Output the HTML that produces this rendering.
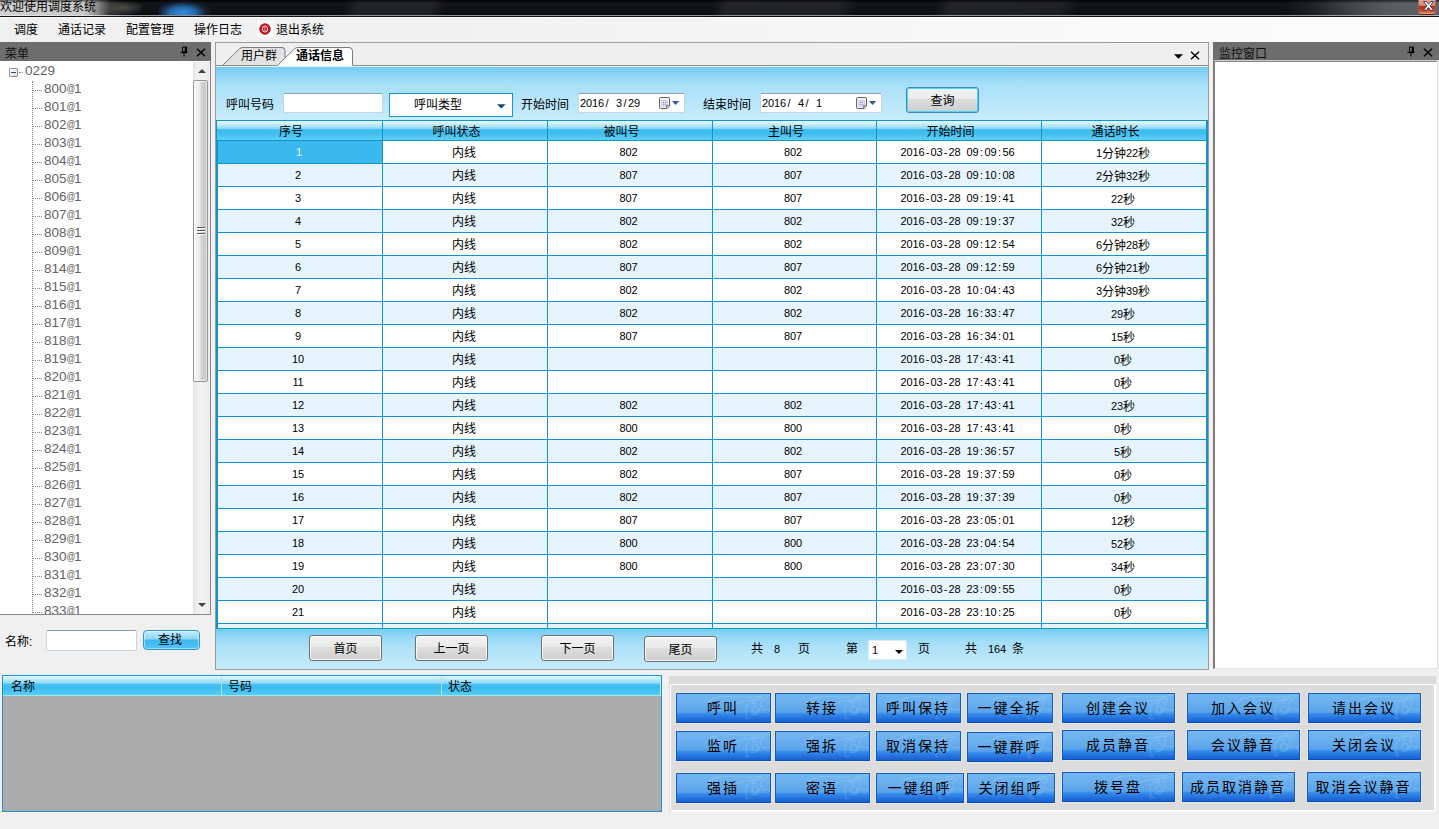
<!DOCTYPE html>
<html lang="zh-CN">
<head>
<meta charset="utf-8">
<title>欢迎使用调度系统</title>
<style>
*{margin:0;padding:0;box-sizing:border-box}
html,body{width:1439px;height:829px;overflow:hidden}
body{position:relative;background:#f0f0f0;font-family:"Liberation Sans","Noto Sans CJK SC",sans-serif;font-size:12px;color:#000;line-height:14px}
div,span,i,b{position:absolute;display:block;white-space:nowrap}
svg{position:absolute;display:block;overflow:visible}
.m{font-family:"Liberation Sans","Noto Sans CJK SC",sans-serif;font-size:11px;letter-spacing:-.12px}
span.mi,span.ci{position:static;display:inline}
span.mi{font-family:"Liberation Sans","Noto Sans CJK SC",sans-serif;font-size:11px;letter-spacing:-.12px;vertical-align:1px}

/* title bar */
#title{left:0;top:0;width:1439px;height:15px;background:#0b0d10;overflow:hidden}
#title .tg{left:0;top:0;width:1439px;height:16px}
#title .txt{left:0;top:0;height:15px;line-height:15px;font-size:12px;color:#000;z-index:3}
#tline0{left:0;top:15px;width:1439px;height:1px;background:linear-gradient(90deg,#e4e4e4 0,#dcdcdc 90px,#8f9294 135px,#8f9294 1300px,#b4b6b8 1439px)}
#tline{left:0;top:16px;width:1439px;height:1px;background:#101214}
#tline2{left:0;top:17px;width:1439px;height:1px;background:#fbfbfb;z-index:2}
#closeb{left:1418px;top:0;width:18px;height:15px;border-radius:0 0 3px 3px;background:linear-gradient(#e9a596 0,#d98676 38%,#bd3318 46%,#b8391f 62%,#d06a4a 88%,#e7b0a0 100%);border:1px solid #5b2017;border-top:0;border-left-color:#8d6a64;border-right-color:#8d6a64;z-index:4}

/* menu */
#menu{left:0;top:17px;width:1439px;height:25px;background:linear-gradient(90deg,#f0f0f0 0,#f1f1f1 30%,#fafafa 80%,#fcfcfc 100%)}
#menu .mi2{top:6px;height:14px;line-height:14px;font-size:12px}
#exitico{left:257px;top:4px;width:16px;height:16px;background:#fcfcfc}

/* dock headers */
.dockhead{background:#6d6d6d}
.dockhead .dh-t{top:5px;height:14px;line-height:14px;font-size:12px;color:#101010}

/* tree */
#tree{left:0;top:61px;width:211px;height:554px;background:#fff;border-right:1px solid #828790;border-bottom:1px solid #828790;overflow:hidden}
.tn{font-family:"Liberation Sans","Noto Sans CJK SC",sans-serif;font-size:13.5px;letter-spacing:0;color:#636363;height:18px;line-height:16px}
.tdots{height:0;border-top:1px dotted #8a8a8a}
.tvline{left:32px;top:20px;width:0;height:540px;border-left:1px dotted #8a8a8a}
.tbox{left:9px;top:7px;width:9px;height:9px;border:1px solid #919191;background:linear-gradient(135deg,#fff,#e0e0e0);border-radius:1px}
.tbox i{left:1px;top:3px;width:5px;height:1px;background:#2a3fae}
.lbl{height:14px;line-height:14px;font-size:12px}
.inp{background:#fff;border:1px solid #c4d6e4;border-top-color:#8e9db2;border-radius:2px}
.bbtn{border:1px solid #2a97d8;border-radius:4px;text-align:center;font-size:12px;background:linear-gradient(#c6ecfb 0,#8dd5f6 45%,#3fb9ef 50%,#52c4f3 100%);box-shadow:inset 0 0 0 1px rgba(255,255,255,.45)}

/* center */
#center{left:215px;top:42px;width:994px;height:628px;border:1px solid #9b9b9b;background:#efefef;overflow:hidden}
#center>*{}
#blue1{left:0;top:24px;width:992px;height:54px;background:linear-gradient(#72ccf5 0,#8ed6f7 14%,#a6dff8 32%,#b4e4f9 55%,#c8edfb 100%)}
#blue2{left:0;top:586px;width:992px;height:40px;background:linear-gradient(#72ccf5 0,#8ed6f7 16%,#a6dff8 36%,#b4e4f9 60%,#c6ecfb 100%)}
.tabline{left:0;top:22px;width:992px;height:1px;background:#8e8e8e}
#tabline2{left:0;top:23px;width:992px;height:1px;background:#e8f3f8}

/* grid: origin at page (216,120) => center-relative (0,77) */
#grid{left:0;top:77px;width:992px;height:509px;background:#0f94cf;overflow:hidden}
.th{top:1px;height:19px;line-height:22px;overflow:hidden;text-align:center;padding-right:17px;font-size:12px;background:linear-gradient(#e6f9fe 0,#c4edfb 18%,#8fd9f6 40%,#45c0f0 43%,#3dbcef 62%,#5ed1f8 100%)}
.tr{left:2px;width:988px;height:22px;background:#fff}
.tr.alt{background:#e6f5fd}
.td{top:0;height:22px;line-height:25px;overflow:hidden;text-align:center;font-size:12px;margin-left:-2px;padding-right:2px}
.td.m{font-size:11px;line-height:22px;padding-right:3px}
.td.sel{background:#3ab9ef;color:#fff;margin-left:-1px;padding-right:3px}
.vl{top:0;width:1px;height:509px;background:#0f94cf}

/* generic win buttons */
.gbtn{border:1px solid #707070;border-radius:3px;text-align:center;font-size:12px;background:linear-gradient(#f2f2f2 0,#ebebeb 43%,#dddddd 47%,#cfcfcf 100%);box-shadow:inset 0 0 0 1px rgba(255,255,255,.8)}
.qbtn{border:1px solid #3c8ac0;border-radius:3px;text-align:center;font-size:12px;background:linear-gradient(#f2f2f2 0,#ebebeb 43%,#dddddd 47%,#cfcfcf 100%);box-shadow:inset 0 0 0 1px #48d8fb}

/* monitor */
#monitor{left:1213px;top:60px;width:225px;height:609px;background:#fff;border-left:2px solid #7c7c7c;border-top:1px solid #c9c9c9;box-shadow:inset 0 1px 0 #8a8a8a;border-right:1px solid #e3e3e3;border-bottom:1px solid #e3e3e3}

/* bottom list */
#blist{left:2px;top:675px;width:660px;height:137px;background:#ababab;border:1px solid #1a93cd}
#blist .lh{left:0;top:0;width:658px;height:20px;background:linear-gradient(#e4f8fe 0,#b9e8fa 18%,#8fd9f6 38%,#45c0f0 43%,#3dbcef 62%,#58ccf6 100%);border-bottom:1px solid #9be9ea;box-shadow:inset -1px 0 0 #b6eef8}
#blist .lh>span{top:4px;height:14px;line-height:14px;font-size:12px}
#blist .lh i{top:0;width:1px;height:19px;background:#a8e4f9}

/* button panel */
#bpanel{left:669px;top:676px;width:767px;height:136px;background:#dcdcdc}
#bpanel .etch{left:1px;top:8px;width:766px;height:128px;border:1px solid #fff;border-right:2px solid #fdfdfd;border-bottom:2px solid #fdfdfd;border-radius:2px}
.ab{border:1px solid #0d5cc6;background:linear-gradient(#73b5f1 0,#6bb0ef 30%,#5aa3ea 65%,#3891ef 69%,#2d80e5 78%,#2069d9 92%,#1a5fd0 100%);border-bottom-color:#0452c2;text-align:center;overflow:hidden;box-shadow:0 0 0 1px #e9e4e0}
.ab>span{left:0;top:0;width:100%;height:100%;line-height:28px;font-size:14px;letter-spacing:2px;color:#000;text-align:center;padding-right:1px}
.ab svg{right:0;top:0}

b.c{position:static;display:inline-block;width:6px;text-align:center;letter-spacing:0;font-weight:normal}
b.at{position:static;display:inline-block;width:7.5px;font-weight:normal;font-size:8.6px;line-height:10px;vertical-align:1.5px;letter-spacing:0;transform:scaleY(1.22);transform-origin:50% 100%}

</style>
</head>
<body>

<div id="title">
<div class="tg" style="background:linear-gradient(96deg,#0b0d10 0,#0b0d10 1278px,#191c1f 1305px,#3d4043 1343px,#54575a 1380px,#606366 1439px)"></div>
<div class="tg" style="background:linear-gradient(105deg,rgba(255,255,255,0) 334px,rgba(255,255,255,.075) 348px,rgba(255,255,255,.075) 418px,rgba(255,255,255,0) 432px,rgba(255,255,255,0) 690px,rgba(255,255,255,.08) 704px,rgba(255,255,255,.07) 812px,rgba(255,255,255,0) 830px,rgba(255,255,255,0) 906px,rgba(255,255,255,.075) 920px,rgba(255,255,255,.06) 1026px,rgba(255,255,255,0) 1044px)"></div>
<div class="tg" style="background:linear-gradient(rgba(0,0,0,.55) 0,rgba(0,0,0,.25) 2px,rgba(255,255,255,.03) 3px,rgba(255,255,255,0) 100%)"></div>
<div style="left:158px;top:0;width:54px;height:19px;background:radial-gradient(ellipse at 46% 68%,rgba(52,150,232,.95) 0,rgba(44,128,210,.8) 30%,rgba(24,70,130,.25) 58%,rgba(20,60,110,0) 74%)"></div>
<div style="left:100px;top:1px;width:42px;height:15px;background:radial-gradient(ellipse at 55% 45%,rgba(150,140,100,.5) 0,rgba(100,110,110,.25) 45%,rgba(100,100,90,0) 72%)"></div>
<div style="left:0;top:0;width:150px;height:16px;background:linear-gradient(90deg,rgba(214,214,214,.97) 0,rgba(208,208,208,.96) 84px,rgba(170,170,170,.78) 98px,rgba(100,100,100,.4) 110px,rgba(40,40,40,.1) 122px,rgba(30,30,30,0) 130px)"></div>
<div style="left:0;top:0;width:150px;height:3px;background:linear-gradient(rgba(0,0,0,.55),rgba(0,0,0,0))"></div>
<div class="txt">欢迎使用调度系统</div>
<div id="closeb"><svg width="11" height="10" viewBox="0 0 11 10" style="left:4px;top:1px"><path d="M.4 .5 H3.3 L5.5 3.3 L7.7 .5 H10.6 L7.1 4.9 L10.6 9.3 H7.7 L5.5 6.5 L3.3 9.3 H.4 L3.9 4.9 Z" fill="#fff" stroke="#2c3248" stroke-width=".9" stroke-linejoin="round"/></svg></div>
</div>
<div id="tline0"></div><div id="tline"></div><div id="tline2"></div>
<div id="menu">
<span class="mi2" style="left:14px">调度</span>
<span class="mi2" style="left:58px">通话记录</span>
<span class="mi2" style="left:126px">配置管理</span>
<span class="mi2" style="left:194px">操作日志</span>
<div id="exitico"><svg width="16" height="16" viewBox="0 0 16 16"><circle cx="8" cy="8" r="5.3" fill="#c4161c"/><circle cx="8" cy="8" r="5.3" fill="none" stroke="#a20f14" stroke-width=".8"/><ellipse cx="8" cy="8" rx="2.6" ry="3.1" fill="none" stroke="#fbe3e3" stroke-width="1"/><rect x="7.4" y="6" width="1.2" height="4" fill="#e88" /></svg></div>
<span class="mi2" style="left:276px">退出系统</span>
</div>
<div class="dockhead" style="left:0;top:42px;width:211px;height:19px"><span class="dh-t" style="left:5px">菜单</span><svg width="8" height="11" viewBox="0 0 8 11" style="left:180px;top:4px"><path d="M2.5 1 H6.5 V6 H2.5 Z" fill="none" stroke="#000" stroke-width="1"/><path d="M5.5 1 V6" stroke="#000" stroke-width="1.4"/><path d="M0.5 6.5 H7.5" stroke="#000" stroke-width="1.2"/><path d="M4 7 V10.5" stroke="#000" stroke-width="1.1"/></svg><svg width="10" height="9" viewBox="0 0 10 9" style="left:196px;top:6px"><path d="M1 .8 L9 8.2 M9 .8 L1 8.2" stroke="#000" stroke-width="1.5"/></svg>
</div>
<div id="tree">
<div class="tvline"></div>
<div class="tbox"><i></i></div><div class="tdots" style="left:19px;top:11px;width:4px"></div><div class="tn" style="left:25px;top:2px">0229</div>
<div class="tdots" style="left:33px;top:29px;width:9px"></div><div class="tn" style="left:44px;top:20px">800<b class="at">@</b>1</div>
<div class="tdots" style="left:33px;top:47px;width:9px"></div><div class="tn" style="left:44px;top:38px">801<b class="at">@</b>1</div>
<div class="tdots" style="left:33px;top:65px;width:9px"></div><div class="tn" style="left:44px;top:56px">802<b class="at">@</b>1</div>
<div class="tdots" style="left:33px;top:83px;width:9px"></div><div class="tn" style="left:44px;top:74px">803<b class="at">@</b>1</div>
<div class="tdots" style="left:33px;top:101px;width:9px"></div><div class="tn" style="left:44px;top:92px">804<b class="at">@</b>1</div>
<div class="tdots" style="left:33px;top:119px;width:9px"></div><div class="tn" style="left:44px;top:110px">805<b class="at">@</b>1</div>
<div class="tdots" style="left:33px;top:137px;width:9px"></div><div class="tn" style="left:44px;top:128px">806<b class="at">@</b>1</div>
<div class="tdots" style="left:33px;top:155px;width:9px"></div><div class="tn" style="left:44px;top:146px">807<b class="at">@</b>1</div>
<div class="tdots" style="left:33px;top:173px;width:9px"></div><div class="tn" style="left:44px;top:164px">808<b class="at">@</b>1</div>
<div class="tdots" style="left:33px;top:191px;width:9px"></div><div class="tn" style="left:44px;top:182px">809<b class="at">@</b>1</div>
<div class="tdots" style="left:33px;top:209px;width:9px"></div><div class="tn" style="left:44px;top:200px">814<b class="at">@</b>1</div>
<div class="tdots" style="left:33px;top:227px;width:9px"></div><div class="tn" style="left:44px;top:218px">815<b class="at">@</b>1</div>
<div class="tdots" style="left:33px;top:245px;width:9px"></div><div class="tn" style="left:44px;top:236px">816<b class="at">@</b>1</div>
<div class="tdots" style="left:33px;top:263px;width:9px"></div><div class="tn" style="left:44px;top:254px">817<b class="at">@</b>1</div>
<div class="tdots" style="left:33px;top:281px;width:9px"></div><div class="tn" style="left:44px;top:272px">818<b class="at">@</b>1</div>
<div class="tdots" style="left:33px;top:299px;width:9px"></div><div class="tn" style="left:44px;top:290px">819<b class="at">@</b>1</div>
<div class="tdots" style="left:33px;top:317px;width:9px"></div><div class="tn" style="left:44px;top:308px">820<b class="at">@</b>1</div>
<div class="tdots" style="left:33px;top:335px;width:9px"></div><div class="tn" style="left:44px;top:326px">821<b class="at">@</b>1</div>
<div class="tdots" style="left:33px;top:353px;width:9px"></div><div class="tn" style="left:44px;top:344px">822<b class="at">@</b>1</div>
<div class="tdots" style="left:33px;top:371px;width:9px"></div><div class="tn" style="left:44px;top:362px">823<b class="at">@</b>1</div>
<div class="tdots" style="left:33px;top:389px;width:9px"></div><div class="tn" style="left:44px;top:380px">824<b class="at">@</b>1</div>
<div class="tdots" style="left:33px;top:407px;width:9px"></div><div class="tn" style="left:44px;top:398px">825<b class="at">@</b>1</div>
<div class="tdots" style="left:33px;top:425px;width:9px"></div><div class="tn" style="left:44px;top:416px">826<b class="at">@</b>1</div>
<div class="tdots" style="left:33px;top:443px;width:9px"></div><div class="tn" style="left:44px;top:434px">827<b class="at">@</b>1</div>
<div class="tdots" style="left:33px;top:461px;width:9px"></div><div class="tn" style="left:44px;top:452px">828<b class="at">@</b>1</div>
<div class="tdots" style="left:33px;top:479px;width:9px"></div><div class="tn" style="left:44px;top:470px">829<b class="at">@</b>1</div>
<div class="tdots" style="left:33px;top:497px;width:9px"></div><div class="tn" style="left:44px;top:488px">830<b class="at">@</b>1</div>
<div class="tdots" style="left:33px;top:515px;width:9px"></div><div class="tn" style="left:44px;top:506px">831<b class="at">@</b>1</div>
<div class="tdots" style="left:33px;top:533px;width:9px"></div><div class="tn" style="left:44px;top:524px">832<b class="at">@</b>1</div>
<div class="tdots" style="left:33px;top:551px;width:9px"></div><div class="tn" style="left:44px;top:542px">833<b class="at">@</b>1</div>
<div style="left:193px;top:1px;width:17px;height:553px;background:linear-gradient(90deg,#e3e3e3 0,#efefef 20%,#f2f2f2 50%,#ececec 100%)"></div>
<svg width="8" height="4" viewBox="0 0 8 4" style="left:198px;top:8px"><path d="M0 4 L4 0 L8 4 Z" fill="#444"/></svg>
<div style="left:193px;top:19px;width:15px;height:302px;border:1px solid #959595;border-radius:2px;background:linear-gradient(90deg,#f5f5f5 0,#e9e9e9 45%,#d4d4d4 55%,#c4c4c4 100%);box-shadow:inset 0 0 0 1px rgba(255,255,255,.6)"></div>
<div style="left:197px;top:166px;width:8px;height:1px;background:#5a5a5a;box-shadow:0 3px 0 #5a5a5a,0 6px 0 #5a5a5a,0 1px 0 #fff,0 4px 0 #fff,0 7px 0 #fff"></div>
<svg width="8" height="4" viewBox="0 0 8 4" style="left:198px;top:542px"><path d="M0 0 L4 4 L8 0 Z" fill="#444"/></svg>
</div>
<div class="lbl" style="left:5px;top:635px;width:40px">名称:</div>
<div class="inp" style="left:46px;top:630px;width:91px;height:21px"></div>
<div class="bbtn" style="left:143px;top:630px;width:57px;height:20px;line-height:19px;padding-right:3px">查找</div>
<div id="center">
<svg width="340" height="24" viewBox="0 0 340 24" style="left:0;top:0">
<path d="M6.5 22.5 L23.5 5.8 Q25 4.5 27 4.5 H66 Q69 4.5 69 7.5 V22.5 Z" fill="#e2e2e2" stroke="#7a7a7a" stroke-width="1"/>
<path d="M61 23 L78.5 5.8 Q80 4.5 82 4.5 H133 Q136.5 4.5 136.5 8 V23 Z" fill="#fff" stroke="none"/>
<path d="M61.5 22.5 L78.5 5.8 Q80 4.5 82 4.5 H133 Q136.5 4.5 136.5 8 V22.5" fill="none" stroke="#7a7a7a" stroke-width="1"/>
</svg>
<div class="tabline" style="left:0;width:62px"></div><div class="tabline" style="left:137px;width:855px"></div>
<div id="tabline2"></div>
<span style="left:25px;top:6px;height:14px;line-height:14px;font-size:12px">用户群</span>
<span style="left:80px;top:6px;height:14px;line-height:14px;font-size:12px;font-weight:bold">通话信息</span>
<svg width="9" height="5" viewBox="0 0 9 5" style="left:958px;top:11px"><path d="M0 .3 H9 L4.5 4.8 Z" fill="#000"/></svg>
<svg width="10" height="9" viewBox="0 0 10 9" style="left:974px;top:8px"><path d="M1 .8 L9 8.2 M9 .8 L1 8.2" stroke="#000" stroke-width="1.5"/></svg>
<div id="blue1"></div>
<span class="lbl" style="left:10px;top:55px">呼叫号码</span>
<div class="inp" style="left:67px;top:50px;width:100px;height:20px"></div>
<div style="left:173px;top:50px;width:124px;height:24px;background:#fff;border:1px solid #1a94cf"><span style="left:24px;top:4px;height:14px;line-height:14px;font-size:12px">呼叫类型</span><svg width="9" height="5" viewBox="0 0 9 5" style="left:107px;top:10px"><path d="M0 .2 H8.6 L4.3 4.4 Z" fill="#0f4f6e"/></svg></div>
<span class="lbl" style="left:305px;top:55px">开始时间</span>
<div class="inp" style="left:362px;top:50px;width:107px;height:20px"><span class="m" style="left:1px;top:2px;height:14px;line-height:14px">2016<b class="c">/</b><b class="c">&nbsp;</b>3<b class="c">/</b>29</span><svg width="21" height="13" viewBox="0 0 21 13" style="left:80px;top:3px"><path d="M2.5 2.5 H11.5 V9.5 L9 12.5 H2.5 Z" fill="#9aa0aa" opacity=".35"/><path d="M1.8 .5 H9.2 Q10.5 .5 10.5 1.8 V8.6 L7.8 11.5 H1.8 Q.5 11.5 .5 10.2 V1.8 Q.5 .5 1.8 .5 Z" fill="#eef2fb" stroke="#6e605d" stroke-width="1"/><rect x="2.4" y="3.3" width="6.2" height="6.2" fill="#b3bbce"/><g fill="#fff"><rect x="3.1" y="4.1" width="1" height="1"/><rect x="5.1" y="4.1" width="1" height="1"/><rect x="7.1" y="4.1" width="1" height="1"/><rect x="3.1" y="6.1" width="1" height="1"/><rect x="5.1" y="6.1" width="1" height="1"/><rect x="7.1" y="6.1" width="1" height="1"/><rect x="3.1" y="8.1" width="1" height="1"/><rect x="5.1" y="8.1" width="1" height="1"/></g><path d="M7.8 11.3 V8.8 H10.3" fill="#fff" stroke="#6e605d" stroke-width="1"/><path d="M13 4 H20.2 L16.6 8 Z" fill="#3a5590"/></svg></div>
<span class="lbl" style="left:487px;top:55px">结束时间</span>
<div class="inp" style="left:544px;top:50px;width:122px;height:20px"><span class="m" style="left:1px;top:2px;height:14px;line-height:14px">2016<b class="c">/</b><b class="c">&nbsp;</b>4<b class="c">/</b><b class="c">&nbsp;</b>1</span><svg width="21" height="13" viewBox="0 0 21 13" style="left:95px;top:3px"><path d="M2.5 2.5 H11.5 V9.5 L9 12.5 H2.5 Z" fill="#9aa0aa" opacity=".35"/><path d="M1.8 .5 H9.2 Q10.5 .5 10.5 1.8 V8.6 L7.8 11.5 H1.8 Q.5 11.5 .5 10.2 V1.8 Q.5 .5 1.8 .5 Z" fill="#eef2fb" stroke="#6e605d" stroke-width="1"/><rect x="2.4" y="3.3" width="6.2" height="6.2" fill="#b3bbce"/><g fill="#fff"><rect x="3.1" y="4.1" width="1" height="1"/><rect x="5.1" y="4.1" width="1" height="1"/><rect x="7.1" y="4.1" width="1" height="1"/><rect x="3.1" y="6.1" width="1" height="1"/><rect x="5.1" y="6.1" width="1" height="1"/><rect x="7.1" y="6.1" width="1" height="1"/><rect x="3.1" y="8.1" width="1" height="1"/><rect x="5.1" y="8.1" width="1" height="1"/></g><path d="M7.8 11.3 V8.8 H10.3" fill="#fff" stroke="#6e605d" stroke-width="1"/><path d="M13 4 H20.2 L16.6 8 Z" fill="#3a5590"/></svg></div>
<div class="qbtn" style="left:690px;top:44px;width:73px;height:26px;line-height:26px">查询</div>
<div id="grid">
<div class="th" style="left:1px;width:165px">序号</div><div class="th" style="left:167px;width:164px">呼叫状态</div><div class="th" style="left:332px;width:164px">被叫号</div><div class="th" style="left:497px;width:163px">主叫号</div><div class="th" style="left:661px;width:164px">开始时间</div><div class="th" style="left:826px;width:164px">通话时长</div>
<div class="tr" style="top:21px"><span class="td m sel" style="left:1px;width:165px">1</span><span class="td" style="left:167px;width:164px">内线</span><span class="td m" style="left:332px;width:164px">802</span><span class="td m" style="left:497px;width:163px">802</span><span class="td m" style="left:661px;width:164px">2016<b class="c">-</b>03<b class="c">-</b>28<b class="c">&nbsp;</b>09<b class="c">:</b>09<b class="c">:</b>56</span><span class="td" style="left:826px;width:164px"><span class="mi">1</span>分钟<span class="mi">22</span>秒</span></div>
<div class="tr alt" style="top:44px"><span class="td m" style="left:1px;width:165px">2</span><span class="td" style="left:167px;width:164px">内线</span><span class="td m" style="left:332px;width:164px">807</span><span class="td m" style="left:497px;width:163px">807</span><span class="td m" style="left:661px;width:164px">2016<b class="c">-</b>03<b class="c">-</b>28<b class="c">&nbsp;</b>09<b class="c">:</b>10<b class="c">:</b>08</span><span class="td" style="left:826px;width:164px"><span class="mi">2</span>分钟<span class="mi">32</span>秒</span></div>
<div class="tr" style="top:67px"><span class="td m" style="left:1px;width:165px">3</span><span class="td" style="left:167px;width:164px">内线</span><span class="td m" style="left:332px;width:164px">807</span><span class="td m" style="left:497px;width:163px">807</span><span class="td m" style="left:661px;width:164px">2016<b class="c">-</b>03<b class="c">-</b>28<b class="c">&nbsp;</b>09<b class="c">:</b>19<b class="c">:</b>41</span><span class="td" style="left:826px;width:164px"><span class="mi">22</span>秒</span></div>
<div class="tr alt" style="top:90px"><span class="td m" style="left:1px;width:165px">4</span><span class="td" style="left:167px;width:164px">内线</span><span class="td m" style="left:332px;width:164px">802</span><span class="td m" style="left:497px;width:163px">802</span><span class="td m" style="left:661px;width:164px">2016<b class="c">-</b>03<b class="c">-</b>28<b class="c">&nbsp;</b>09<b class="c">:</b>19<b class="c">:</b>37</span><span class="td" style="left:826px;width:164px"><span class="mi">32</span>秒</span></div>
<div class="tr" style="top:113px"><span class="td m" style="left:1px;width:165px">5</span><span class="td" style="left:167px;width:164px">内线</span><span class="td m" style="left:332px;width:164px">802</span><span class="td m" style="left:497px;width:163px">802</span><span class="td m" style="left:661px;width:164px">2016<b class="c">-</b>03<b class="c">-</b>28<b class="c">&nbsp;</b>09<b class="c">:</b>12<b class="c">:</b>54</span><span class="td" style="left:826px;width:164px"><span class="mi">6</span>分钟<span class="mi">28</span>秒</span></div>
<div class="tr alt" style="top:136px"><span class="td m" style="left:1px;width:165px">6</span><span class="td" style="left:167px;width:164px">内线</span><span class="td m" style="left:332px;width:164px">807</span><span class="td m" style="left:497px;width:163px">807</span><span class="td m" style="left:661px;width:164px">2016<b class="c">-</b>03<b class="c">-</b>28<b class="c">&nbsp;</b>09<b class="c">:</b>12<b class="c">:</b>59</span><span class="td" style="left:826px;width:164px"><span class="mi">6</span>分钟<span class="mi">21</span>秒</span></div>
<div class="tr" style="top:159px"><span class="td m" style="left:1px;width:165px">7</span><span class="td" style="left:167px;width:164px">内线</span><span class="td m" style="left:332px;width:164px">802</span><span class="td m" style="left:497px;width:163px">802</span><span class="td m" style="left:661px;width:164px">2016<b class="c">-</b>03<b class="c">-</b>28<b class="c">&nbsp;</b>10<b class="c">:</b>04<b class="c">:</b>43</span><span class="td" style="left:826px;width:164px"><span class="mi">3</span>分钟<span class="mi">39</span>秒</span></div>
<div class="tr alt" style="top:182px"><span class="td m" style="left:1px;width:165px">8</span><span class="td" style="left:167px;width:164px">内线</span><span class="td m" style="left:332px;width:164px">802</span><span class="td m" style="left:497px;width:163px">802</span><span class="td m" style="left:661px;width:164px">2016<b class="c">-</b>03<b class="c">-</b>28<b class="c">&nbsp;</b>16<b class="c">:</b>33<b class="c">:</b>47</span><span class="td" style="left:826px;width:164px"><span class="mi">29</span>秒</span></div>
<div class="tr" style="top:205px"><span class="td m" style="left:1px;width:165px">9</span><span class="td" style="left:167px;width:164px">内线</span><span class="td m" style="left:332px;width:164px">807</span><span class="td m" style="left:497px;width:163px">807</span><span class="td m" style="left:661px;width:164px">2016<b class="c">-</b>03<b class="c">-</b>28<b class="c">&nbsp;</b>16<b class="c">:</b>34<b class="c">:</b>01</span><span class="td" style="left:826px;width:164px"><span class="mi">15</span>秒</span></div>
<div class="tr alt" style="top:228px"><span class="td m" style="left:1px;width:165px">10</span><span class="td" style="left:167px;width:164px">内线</span><span class="td m" style="left:332px;width:164px"></span><span class="td m" style="left:497px;width:163px"></span><span class="td m" style="left:661px;width:164px">2016<b class="c">-</b>03<b class="c">-</b>28<b class="c">&nbsp;</b>17<b class="c">:</b>43<b class="c">:</b>41</span><span class="td" style="left:826px;width:164px"><span class="mi">0</span>秒</span></div>
<div class="tr" style="top:251px"><span class="td m" style="left:1px;width:165px">11</span><span class="td" style="left:167px;width:164px">内线</span><span class="td m" style="left:332px;width:164px"></span><span class="td m" style="left:497px;width:163px"></span><span class="td m" style="left:661px;width:164px">2016<b class="c">-</b>03<b class="c">-</b>28<b class="c">&nbsp;</b>17<b class="c">:</b>43<b class="c">:</b>41</span><span class="td" style="left:826px;width:164px"><span class="mi">0</span>秒</span></div>
<div class="tr alt" style="top:274px"><span class="td m" style="left:1px;width:165px">12</span><span class="td" style="left:167px;width:164px">内线</span><span class="td m" style="left:332px;width:164px">802</span><span class="td m" style="left:497px;width:163px">802</span><span class="td m" style="left:661px;width:164px">2016<b class="c">-</b>03<b class="c">-</b>28<b class="c">&nbsp;</b>17<b class="c">:</b>43<b class="c">:</b>41</span><span class="td" style="left:826px;width:164px"><span class="mi">23</span>秒</span></div>
<div class="tr" style="top:297px"><span class="td m" style="left:1px;width:165px">13</span><span class="td" style="left:167px;width:164px">内线</span><span class="td m" style="left:332px;width:164px">800</span><span class="td m" style="left:497px;width:163px">800</span><span class="td m" style="left:661px;width:164px">2016<b class="c">-</b>03<b class="c">-</b>28<b class="c">&nbsp;</b>17<b class="c">:</b>43<b class="c">:</b>41</span><span class="td" style="left:826px;width:164px"><span class="mi">0</span>秒</span></div>
<div class="tr alt" style="top:320px"><span class="td m" style="left:1px;width:165px">14</span><span class="td" style="left:167px;width:164px">内线</span><span class="td m" style="left:332px;width:164px">802</span><span class="td m" style="left:497px;width:163px">802</span><span class="td m" style="left:661px;width:164px">2016<b class="c">-</b>03<b class="c">-</b>28<b class="c">&nbsp;</b>19<b class="c">:</b>36<b class="c">:</b>57</span><span class="td" style="left:826px;width:164px"><span class="mi">5</span>秒</span></div>
<div class="tr" style="top:343px"><span class="td m" style="left:1px;width:165px">15</span><span class="td" style="left:167px;width:164px">内线</span><span class="td m" style="left:332px;width:164px">802</span><span class="td m" style="left:497px;width:163px">807</span><span class="td m" style="left:661px;width:164px">2016<b class="c">-</b>03<b class="c">-</b>28<b class="c">&nbsp;</b>19<b class="c">:</b>37<b class="c">:</b>59</span><span class="td" style="left:826px;width:164px"><span class="mi">0</span>秒</span></div>
<div class="tr alt" style="top:366px"><span class="td m" style="left:1px;width:165px">16</span><span class="td" style="left:167px;width:164px">内线</span><span class="td m" style="left:332px;width:164px">802</span><span class="td m" style="left:497px;width:163px">807</span><span class="td m" style="left:661px;width:164px">2016<b class="c">-</b>03<b class="c">-</b>28<b class="c">&nbsp;</b>19<b class="c">:</b>37<b class="c">:</b>39</span><span class="td" style="left:826px;width:164px"><span class="mi">0</span>秒</span></div>
<div class="tr" style="top:389px"><span class="td m" style="left:1px;width:165px">17</span><span class="td" style="left:167px;width:164px">内线</span><span class="td m" style="left:332px;width:164px">807</span><span class="td m" style="left:497px;width:163px">807</span><span class="td m" style="left:661px;width:164px">2016<b class="c">-</b>03<b class="c">-</b>28<b class="c">&nbsp;</b>23<b class="c">:</b>05<b class="c">:</b>01</span><span class="td" style="left:826px;width:164px"><span class="mi">12</span>秒</span></div>
<div class="tr alt" style="top:412px"><span class="td m" style="left:1px;width:165px">18</span><span class="td" style="left:167px;width:164px">内线</span><span class="td m" style="left:332px;width:164px">800</span><span class="td m" style="left:497px;width:163px">800</span><span class="td m" style="left:661px;width:164px">2016<b class="c">-</b>03<b class="c">-</b>28<b class="c">&nbsp;</b>23<b class="c">:</b>04<b class="c">:</b>54</span><span class="td" style="left:826px;width:164px"><span class="mi">52</span>秒</span></div>
<div class="tr" style="top:435px"><span class="td m" style="left:1px;width:165px">19</span><span class="td" style="left:167px;width:164px">内线</span><span class="td m" style="left:332px;width:164px">800</span><span class="td m" style="left:497px;width:163px">800</span><span class="td m" style="left:661px;width:164px">2016<b class="c">-</b>03<b class="c">-</b>28<b class="c">&nbsp;</b>23<b class="c">:</b>07<b class="c">:</b>30</span><span class="td" style="left:826px;width:164px"><span class="mi">34</span>秒</span></div>
<div class="tr alt" style="top:458px"><span class="td m" style="left:1px;width:165px">20</span><span class="td" style="left:167px;width:164px">内线</span><span class="td m" style="left:332px;width:164px"></span><span class="td m" style="left:497px;width:163px"></span><span class="td m" style="left:661px;width:164px">2016<b class="c">-</b>03<b class="c">-</b>28<b class="c">&nbsp;</b>23<b class="c">:</b>09<b class="c">:</b>55</span><span class="td" style="left:826px;width:164px"><span class="mi">0</span>秒</span></div>
<div class="tr" style="top:481px"><span class="td m" style="left:1px;width:165px">21</span><span class="td" style="left:167px;width:164px">内线</span><span class="td m" style="left:332px;width:164px"></span><span class="td m" style="left:497px;width:163px"></span><span class="td m" style="left:661px;width:164px">2016<b class="c">-</b>03<b class="c">-</b>28<b class="c">&nbsp;</b>23<b class="c">:</b>10<b class="c">:</b>25</span><span class="td" style="left:826px;width:164px"><span class="mi">0</span>秒</span></div>
<div class="tr alt" style="top:504px;height:4px"></div>
<div class="vl" style="left:166px"></div><div class="vl" style="left:331px"></div><div class="vl" style="left:496px"></div><div class="vl" style="left:660px"></div><div class="vl" style="left:825px"></div>
</div>
<div id="blue2"></div>
<div class="gbtn" style="left:93px;top:592px;width:73px;height:26px;line-height:26px">首页</div>
<div class="gbtn" style="left:199px;top:592px;width:73px;height:26px;line-height:26px">上一页</div>
<div class="gbtn" style="left:325px;top:592px;width:73px;height:26px;line-height:26px">下一页</div>
<div class="gbtn" style="left:428px;top:593px;width:73px;height:26px;line-height:26px">尾页</div>
<span class="lbl" style="left:535px;top:599px">共</span><span class="m" style="left:558px;top:599px;height:14px;line-height:14px">8</span><span class="lbl" style="left:582px;top:599px">页</span>
<span class="lbl" style="left:630px;top:599px">第</span>
<div class="inp" style="left:652px;top:597px;width:39px;height:20px;border-color:#dfeaf2"><span class="m" style="left:3px;top:2px;height:14px;line-height:14px">1</span><svg width="8" height="4" viewBox="0 0 8 4" style="left:26px;top:9px"><path d="M0 0 H8 L4 4 Z" fill="#000"/></svg></div>
<span class="lbl" style="left:702px;top:599px">页</span>
<span class="lbl" style="left:749px;top:599px">共</span><span class="m" style="left:772px;top:599px;height:14px;line-height:14px">164</span><span class="lbl" style="left:796px;top:599px">条</span>
</div>
<div class="dockhead" style="left:1213px;top:42px;width:226px;height:18px"><span class="dh-t" style="left:6px">监控窗口</span><svg width="8" height="11" viewBox="0 0 8 11" style="left:194px;top:4px"><path d="M2.5 1 H6.5 V6 H2.5 Z" fill="none" stroke="#000" stroke-width="1"/><path d="M5.5 1 V6" stroke="#000" stroke-width="1.4"/><path d="M0.5 6.5 H7.5" stroke="#000" stroke-width="1.2"/><path d="M4 7 V10.5" stroke="#000" stroke-width="1.1"/></svg><svg width="10" height="9" viewBox="0 0 10 9" style="left:210px;top:6px"><path d="M1 .8 L9 8.2 M9 .8 L1 8.2" stroke="#000" stroke-width="1.5"/></svg>
</div>
<div id="monitor"></div>
<div id="blist"><div class="lh"><span style="left:8px">名称</span><i style="left:218px"></i><span style="left:225px">号码</span><i style="left:438px"></i><span style="left:445px">状态</span></div></div>
<div id="bpanel"><div class="etch"></div></div>
<div class="ab" style="left:676px;top:693px;width:95px;height:30px"><svg width="62" height="30" viewBox="0 0 62 30"><g fill="none" stroke="#a4dcf2" stroke-width="1" opacity=".34"><path d="M2 7 Q10 1.5 24 2.5 T46 3 T62 0.5"/><path d="M26 11 Q34 6 44 6 T60 3"/><path d="M0 9 Q3 4 9 3"/><circle cx="47" cy="15.5" r="3.2"/><circle cx="46" cy="8.5" r="1.6"/><path d="M39 23 Q36 14 41 9 Q46 4 54 3"/><path d="M43 20 Q52 22 51.5 14"/><path d="M55 5 Q50 11 54 15 Q57 17 62 15"/><path d="M37 23.5 q2.5 3 4.5 .5"/></g></svg>
<span>呼叫</span></div>
<div class="ab" style="left:775px;top:693px;width:95px;height:30px"><svg width="62" height="30" viewBox="0 0 62 30"><g fill="none" stroke="#a4dcf2" stroke-width="1" opacity=".34"><path d="M2 7 Q10 1.5 24 2.5 T46 3 T62 0.5"/><path d="M26 11 Q34 6 44 6 T60 3"/><path d="M0 9 Q3 4 9 3"/><circle cx="47" cy="15.5" r="3.2"/><circle cx="46" cy="8.5" r="1.6"/><path d="M39 23 Q36 14 41 9 Q46 4 54 3"/><path d="M43 20 Q52 22 51.5 14"/><path d="M55 5 Q50 11 54 15 Q57 17 62 15"/><path d="M37 23.5 q2.5 3 4.5 .5"/></g></svg>
<span>转接</span></div>
<div class="ab" style="left:876px;top:693px;width:85px;height:30px"><svg width="62" height="30" viewBox="0 0 62 30"><g fill="none" stroke="#a4dcf2" stroke-width="1" opacity=".34"><path d="M2 7 Q10 1.5 24 2.5 T46 3 T62 0.5"/><path d="M26 11 Q34 6 44 6 T60 3"/><path d="M0 9 Q3 4 9 3"/><circle cx="47" cy="15.5" r="3.2"/><circle cx="46" cy="8.5" r="1.6"/><path d="M39 23 Q36 14 41 9 Q46 4 54 3"/><path d="M43 20 Q52 22 51.5 14"/><path d="M55 5 Q50 11 54 15 Q57 17 62 15"/><path d="M37 23.5 q2.5 3 4.5 .5"/></g></svg>
<span>呼叫保持</span></div>
<div class="ab" style="left:967px;top:693px;width:86px;height:30px"><svg width="62" height="30" viewBox="0 0 62 30"><g fill="none" stroke="#a4dcf2" stroke-width="1" opacity=".34"><path d="M2 7 Q10 1.5 24 2.5 T46 3 T62 0.5"/><path d="M26 11 Q34 6 44 6 T60 3"/><path d="M0 9 Q3 4 9 3"/><circle cx="47" cy="15.5" r="3.2"/><circle cx="46" cy="8.5" r="1.6"/><path d="M39 23 Q36 14 41 9 Q46 4 54 3"/><path d="M43 20 Q52 22 51.5 14"/><path d="M55 5 Q50 11 54 15 Q57 17 62 15"/><path d="M37 23.5 q2.5 3 4.5 .5"/></g></svg>
<span>一键全拆</span></div>
<div class="ab" style="left:1062px;top:693px;width:113px;height:30px"><svg width="62" height="30" viewBox="0 0 62 30"><g fill="none" stroke="#a4dcf2" stroke-width="1" opacity=".34"><path d="M2 7 Q10 1.5 24 2.5 T46 3 T62 0.5"/><path d="M26 11 Q34 6 44 6 T60 3"/><path d="M0 9 Q3 4 9 3"/><circle cx="47" cy="15.5" r="3.2"/><circle cx="46" cy="8.5" r="1.6"/><path d="M39 23 Q36 14 41 9 Q46 4 54 3"/><path d="M43 20 Q52 22 51.5 14"/><path d="M55 5 Q50 11 54 15 Q57 17 62 15"/><path d="M37 23.5 q2.5 3 4.5 .5"/></g></svg>
<span>创建会议</span></div>
<div class="ab" style="left:1187px;top:693px;width:113px;height:30px"><svg width="62" height="30" viewBox="0 0 62 30"><g fill="none" stroke="#a4dcf2" stroke-width="1" opacity=".34"><path d="M2 7 Q10 1.5 24 2.5 T46 3 T62 0.5"/><path d="M26 11 Q34 6 44 6 T60 3"/><path d="M0 9 Q3 4 9 3"/><circle cx="47" cy="15.5" r="3.2"/><circle cx="46" cy="8.5" r="1.6"/><path d="M39 23 Q36 14 41 9 Q46 4 54 3"/><path d="M43 20 Q52 22 51.5 14"/><path d="M55 5 Q50 11 54 15 Q57 17 62 15"/><path d="M37 23.5 q2.5 3 4.5 .5"/></g></svg>
<span>加入会议</span></div>
<div class="ab" style="left:1308px;top:693px;width:113px;height:30px"><svg width="62" height="30" viewBox="0 0 62 30"><g fill="none" stroke="#a4dcf2" stroke-width="1" opacity=".34"><path d="M2 7 Q10 1.5 24 2.5 T46 3 T62 0.5"/><path d="M26 11 Q34 6 44 6 T60 3"/><path d="M0 9 Q3 4 9 3"/><circle cx="47" cy="15.5" r="3.2"/><circle cx="46" cy="8.5" r="1.6"/><path d="M39 23 Q36 14 41 9 Q46 4 54 3"/><path d="M43 20 Q52 22 51.5 14"/><path d="M55 5 Q50 11 54 15 Q57 17 62 15"/><path d="M37 23.5 q2.5 3 4.5 .5"/></g></svg>
<span>请出会议</span></div>
<div class="ab" style="left:676px;top:731px;width:95px;height:30px"><svg width="62" height="30" viewBox="0 0 62 30"><g fill="none" stroke="#a4dcf2" stroke-width="1" opacity=".34"><path d="M2 7 Q10 1.5 24 2.5 T46 3 T62 0.5"/><path d="M26 11 Q34 6 44 6 T60 3"/><path d="M0 9 Q3 4 9 3"/><circle cx="47" cy="15.5" r="3.2"/><circle cx="46" cy="8.5" r="1.6"/><path d="M39 23 Q36 14 41 9 Q46 4 54 3"/><path d="M43 20 Q52 22 51.5 14"/><path d="M55 5 Q50 11 54 15 Q57 17 62 15"/><path d="M37 23.5 q2.5 3 4.5 .5"/></g></svg>
<span>监听</span></div>
<div class="ab" style="left:775px;top:731px;width:95px;height:30px"><svg width="62" height="30" viewBox="0 0 62 30"><g fill="none" stroke="#a4dcf2" stroke-width="1" opacity=".34"><path d="M2 7 Q10 1.5 24 2.5 T46 3 T62 0.5"/><path d="M26 11 Q34 6 44 6 T60 3"/><path d="M0 9 Q3 4 9 3"/><circle cx="47" cy="15.5" r="3.2"/><circle cx="46" cy="8.5" r="1.6"/><path d="M39 23 Q36 14 41 9 Q46 4 54 3"/><path d="M43 20 Q52 22 51.5 14"/><path d="M55 5 Q50 11 54 15 Q57 17 62 15"/><path d="M37 23.5 q2.5 3 4.5 .5"/></g></svg>
<span>强拆</span></div>
<div class="ab" style="left:876px;top:731px;width:85px;height:30px"><svg width="62" height="30" viewBox="0 0 62 30"><g fill="none" stroke="#a4dcf2" stroke-width="1" opacity=".34"><path d="M2 7 Q10 1.5 24 2.5 T46 3 T62 0.5"/><path d="M26 11 Q34 6 44 6 T60 3"/><path d="M0 9 Q3 4 9 3"/><circle cx="47" cy="15.5" r="3.2"/><circle cx="46" cy="8.5" r="1.6"/><path d="M39 23 Q36 14 41 9 Q46 4 54 3"/><path d="M43 20 Q52 22 51.5 14"/><path d="M55 5 Q50 11 54 15 Q57 17 62 15"/><path d="M37 23.5 q2.5 3 4.5 .5"/></g></svg>
<span>取消保持</span></div>
<div class="ab" style="left:967px;top:732px;width:86px;height:30px"><svg width="62" height="30" viewBox="0 0 62 30"><g fill="none" stroke="#a4dcf2" stroke-width="1" opacity=".34"><path d="M2 7 Q10 1.5 24 2.5 T46 3 T62 0.5"/><path d="M26 11 Q34 6 44 6 T60 3"/><path d="M0 9 Q3 4 9 3"/><circle cx="47" cy="15.5" r="3.2"/><circle cx="46" cy="8.5" r="1.6"/><path d="M39 23 Q36 14 41 9 Q46 4 54 3"/><path d="M43 20 Q52 22 51.5 14"/><path d="M55 5 Q50 11 54 15 Q57 17 62 15"/><path d="M37 23.5 q2.5 3 4.5 .5"/></g></svg>
<span>一键群呼</span></div>
<div class="ab" style="left:1062px;top:730px;width:113px;height:30px"><svg width="62" height="30" viewBox="0 0 62 30"><g fill="none" stroke="#a4dcf2" stroke-width="1" opacity=".34"><path d="M2 7 Q10 1.5 24 2.5 T46 3 T62 0.5"/><path d="M26 11 Q34 6 44 6 T60 3"/><path d="M0 9 Q3 4 9 3"/><circle cx="47" cy="15.5" r="3.2"/><circle cx="46" cy="8.5" r="1.6"/><path d="M39 23 Q36 14 41 9 Q46 4 54 3"/><path d="M43 20 Q52 22 51.5 14"/><path d="M55 5 Q50 11 54 15 Q57 17 62 15"/><path d="M37 23.5 q2.5 3 4.5 .5"/></g></svg>
<span>成员静音</span></div>
<div class="ab" style="left:1187px;top:730px;width:113px;height:30px"><svg width="62" height="30" viewBox="0 0 62 30"><g fill="none" stroke="#a4dcf2" stroke-width="1" opacity=".34"><path d="M2 7 Q10 1.5 24 2.5 T46 3 T62 0.5"/><path d="M26 11 Q34 6 44 6 T60 3"/><path d="M0 9 Q3 4 9 3"/><circle cx="47" cy="15.5" r="3.2"/><circle cx="46" cy="8.5" r="1.6"/><path d="M39 23 Q36 14 41 9 Q46 4 54 3"/><path d="M43 20 Q52 22 51.5 14"/><path d="M55 5 Q50 11 54 15 Q57 17 62 15"/><path d="M37 23.5 q2.5 3 4.5 .5"/></g></svg>
<span>会议静音</span></div>
<div class="ab" style="left:1308px;top:730px;width:113px;height:30px"><svg width="62" height="30" viewBox="0 0 62 30"><g fill="none" stroke="#a4dcf2" stroke-width="1" opacity=".34"><path d="M2 7 Q10 1.5 24 2.5 T46 3 T62 0.5"/><path d="M26 11 Q34 6 44 6 T60 3"/><path d="M0 9 Q3 4 9 3"/><circle cx="47" cy="15.5" r="3.2"/><circle cx="46" cy="8.5" r="1.6"/><path d="M39 23 Q36 14 41 9 Q46 4 54 3"/><path d="M43 20 Q52 22 51.5 14"/><path d="M55 5 Q50 11 54 15 Q57 17 62 15"/><path d="M37 23.5 q2.5 3 4.5 .5"/></g></svg>
<span>关闭会议</span></div>
<div class="ab" style="left:676px;top:773px;width:95px;height:30px"><svg width="62" height="30" viewBox="0 0 62 30"><g fill="none" stroke="#a4dcf2" stroke-width="1" opacity=".34"><path d="M2 7 Q10 1.5 24 2.5 T46 3 T62 0.5"/><path d="M26 11 Q34 6 44 6 T60 3"/><path d="M0 9 Q3 4 9 3"/><circle cx="47" cy="15.5" r="3.2"/><circle cx="46" cy="8.5" r="1.6"/><path d="M39 23 Q36 14 41 9 Q46 4 54 3"/><path d="M43 20 Q52 22 51.5 14"/><path d="M55 5 Q50 11 54 15 Q57 17 62 15"/><path d="M37 23.5 q2.5 3 4.5 .5"/></g></svg>
<span>强插</span></div>
<div class="ab" style="left:775px;top:773px;width:95px;height:30px"><svg width="62" height="30" viewBox="0 0 62 30"><g fill="none" stroke="#a4dcf2" stroke-width="1" opacity=".34"><path d="M2 7 Q10 1.5 24 2.5 T46 3 T62 0.5"/><path d="M26 11 Q34 6 44 6 T60 3"/><path d="M0 9 Q3 4 9 3"/><circle cx="47" cy="15.5" r="3.2"/><circle cx="46" cy="8.5" r="1.6"/><path d="M39 23 Q36 14 41 9 Q46 4 54 3"/><path d="M43 20 Q52 22 51.5 14"/><path d="M55 5 Q50 11 54 15 Q57 17 62 15"/><path d="M37 23.5 q2.5 3 4.5 .5"/></g></svg>
<span>密语</span></div>
<div class="ab" style="left:876px;top:773px;width:88px;height:30px"><svg width="62" height="30" viewBox="0 0 62 30"><g fill="none" stroke="#a4dcf2" stroke-width="1" opacity=".34"><path d="M2 7 Q10 1.5 24 2.5 T46 3 T62 0.5"/><path d="M26 11 Q34 6 44 6 T60 3"/><path d="M0 9 Q3 4 9 3"/><circle cx="47" cy="15.5" r="3.2"/><circle cx="46" cy="8.5" r="1.6"/><path d="M39 23 Q36 14 41 9 Q46 4 54 3"/><path d="M43 20 Q52 22 51.5 14"/><path d="M55 5 Q50 11 54 15 Q57 17 62 15"/><path d="M37 23.5 q2.5 3 4.5 .5"/></g></svg>
<span>一键组呼</span></div>
<div class="ab" style="left:967px;top:773px;width:88px;height:30px"><svg width="62" height="30" viewBox="0 0 62 30"><g fill="none" stroke="#a4dcf2" stroke-width="1" opacity=".34"><path d="M2 7 Q10 1.5 24 2.5 T46 3 T62 0.5"/><path d="M26 11 Q34 6 44 6 T60 3"/><path d="M0 9 Q3 4 9 3"/><circle cx="47" cy="15.5" r="3.2"/><circle cx="46" cy="8.5" r="1.6"/><path d="M39 23 Q36 14 41 9 Q46 4 54 3"/><path d="M43 20 Q52 22 51.5 14"/><path d="M55 5 Q50 11 54 15 Q57 17 62 15"/><path d="M37 23.5 q2.5 3 4.5 .5"/></g></svg>
<span>关闭组呼</span></div>
<div class="ab" style="left:1062px;top:772px;width:113px;height:30px"><svg width="62" height="30" viewBox="0 0 62 30"><g fill="none" stroke="#a4dcf2" stroke-width="1" opacity=".34"><path d="M2 7 Q10 1.5 24 2.5 T46 3 T62 0.5"/><path d="M26 11 Q34 6 44 6 T60 3"/><path d="M0 9 Q3 4 9 3"/><circle cx="47" cy="15.5" r="3.2"/><circle cx="46" cy="8.5" r="1.6"/><path d="M39 23 Q36 14 41 9 Q46 4 54 3"/><path d="M43 20 Q52 22 51.5 14"/><path d="M55 5 Q50 11 54 15 Q57 17 62 15"/><path d="M37 23.5 q2.5 3 4.5 .5"/></g></svg>
<span>拨号盘</span></div>
<div class="ab" style="left:1182px;top:772px;width:113px;height:30px"><svg width="62" height="30" viewBox="0 0 62 30"><g fill="none" stroke="#a4dcf2" stroke-width="1" opacity=".34"><path d="M2 7 Q10 1.5 24 2.5 T46 3 T62 0.5"/><path d="M26 11 Q34 6 44 6 T60 3"/><path d="M0 9 Q3 4 9 3"/><circle cx="47" cy="15.5" r="3.2"/><circle cx="46" cy="8.5" r="1.6"/><path d="M39 23 Q36 14 41 9 Q46 4 54 3"/><path d="M43 20 Q52 22 51.5 14"/><path d="M55 5 Q50 11 54 15 Q57 17 62 15"/><path d="M37 23.5 q2.5 3 4.5 .5"/></g></svg>
<span>成员取消静音</span></div>
<div class="ab" style="left:1307px;top:772px;width:114px;height:30px"><svg width="62" height="30" viewBox="0 0 62 30"><g fill="none" stroke="#a4dcf2" stroke-width="1" opacity=".34"><path d="M2 7 Q10 1.5 24 2.5 T46 3 T62 0.5"/><path d="M26 11 Q34 6 44 6 T60 3"/><path d="M0 9 Q3 4 9 3"/><circle cx="47" cy="15.5" r="3.2"/><circle cx="46" cy="8.5" r="1.6"/><path d="M39 23 Q36 14 41 9 Q46 4 54 3"/><path d="M43 20 Q52 22 51.5 14"/><path d="M55 5 Q50 11 54 15 Q57 17 62 15"/><path d="M37 23.5 q2.5 3 4.5 .5"/></g></svg>
<span>取消会议静音</span></div>
</body>
</html>
